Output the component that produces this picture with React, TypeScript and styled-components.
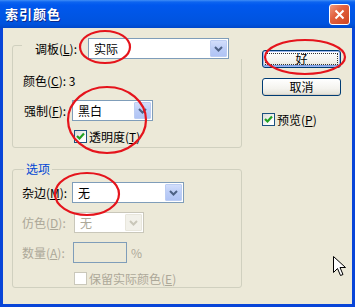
import React from "react";
import styled, { createGlobalStyle } from "styled-components";

const Global = createGlobalStyle`
  html, body { margin: 0; padding: 0; background: #ffffff; }
  body { font-family: "Noto Sans CJK SC", "Noto Sans", sans-serif; }
  #root { width: 355px; height: 307px; }
`;

const FONT = `"Noto Sans CJK SC", "Noto Sans", sans-serif`;

const Window = styled.div`
  position: relative;
  width: 355px;
  height: 307px;
  display: flex;
  flex-direction: column;
  background: #0845d8;
  overflow: hidden;
  font-family: ${FONT};
  font-size: 12px;
  color: #000;
`;

const TitleBar = styled.div`
  height: 28px;
  flex: none;
  display: flex;
  align-items: center;
  justify-content: space-between;
  padding: 0 5px 0 5px;
  background: linear-gradient(
    to bottom,
    #3f8ef6 0px,
    #0d65f0 2px,
    #0058ee 5px,
    #0056e6 50%,
    #0053de 85%,
    #0048ca 100%
  );
`;

const Title = styled.span`
  color: #ffffff;
  font-weight: bold;
  font-size: 13px;
  line-height: 14px;
  letter-spacing: 1px;
  text-shadow: 1px 1px 0 #0a2a8c;
`;

const CloseButton = styled.div`
  width: 19px;
  height: 19px;
  border: 1px solid #ffffff;
  border-radius: 3px;
  background: linear-gradient(135deg, #ef9a80 0%, #e2613f 40%, #cf4420 100%);
  display: flex;
  align-items: center;
  justify-content: center;
`;

const Client = styled.div`
  flex: 1;
  margin: 0 3px 3px 3px;
  background: #ece9d8;
  display: flex;
  padding: 10px 0 0 9px;
`;

const LeftColumn = styled.div`
  width: 230px;
  display: flex;
  flex-direction: column;
`;

const GroupBox = styled.div<{ $top: number; $bottom: number }>`
  margin-top: ${(p) => p.$top}px;
  border: 1px solid #d0d0bf;
  border-radius: 3px;
  padding-bottom: ${(p) => p.$bottom}px;
  display: flex;
  flex-direction: column;
`;

const LegendRow = styled.div`
  margin: -8px 0 0 9px;
  width: 213px;
  height: 21px;
  padding-left: 13px;
  background: #ece9d8;
  display: grid;
  grid-template-columns: 53px 141px;
  align-items: center;
`;

const LegendText = styled.span`
  align-self: flex-start;
  margin: -8px 0 0 11px;
  padding: 0 2px;
  line-height: 14px;
  height: 14px;
  background: #ece9d8;
  color: #0046d5;
`;

const Rows = styled.div<{ $top: number }>`
  margin-top: ${(p) => p.$top}px;
  padding-left: 9px;
  display: grid;
  grid-template-columns: 50px auto;
  row-gap: 9px;
  justify-items: start;
  align-items: center;
`;

const Label = styled.span<{ $disabled?: boolean; $indent?: number }>`
  line-height: 14px;
  white-space: nowrap;
  margin-left: ${(p) => p.$indent ?? 0}px;
  color: ${(p) => (p.$disabled ? "#aca899" : "#000")};
`;

const FullRow = styled.div<{ $indent?: number }>`
  grid-column: 1 / span 2;
  height: 21px;
  display: flex;
  align-items: center;
  padding-left: ${(p) => p.$indent ?? 0}px;
`;

const ControlRow = styled.div<{ $shift?: number }>`
  display: flex;
  align-items: center;
  gap: 4px;
  margin-left: ${(p) => p.$shift ?? 0}px;
`;

const ComboBox = styled.div<{ $w: number; $disabled?: boolean }>`
  width: ${(p) => p.$w}px;
  height: 21px;
  box-sizing: border-box;
  border: 1px solid ${(p) => (p.$disabled ? "#c9c7ba" : "#7f9db9")};
  background: #ffffff;
  display: flex;
  align-items: stretch;
  padding: 1px;
`;

const ComboValue = styled.span<{ $disabled?: boolean }>`
  flex: 1;
  padding-left: 4px;
  display: flex;
  align-items: center;
  line-height: 14px;
  color: ${(p) => (p.$disabled ? "#aca899" : "#000")};
`;

const DropButton = styled.div<{ $disabled?: boolean }>`
  width: 15px;
  border: 1px solid ${(p) => (p.$disabled ? "#e8e6dc" : "#bccdf3")};
  border-radius: 1px;
  background: ${(p) =>
    p.$disabled
      ? "#f2f1ea"
      : "linear-gradient(to bottom, #d2defb 0%, #bccdf7 50%, #b0c4f5 100%)"};
  display: flex;
  align-items: center;
  justify-content: center;
`;

const NumberField = styled.div`
  width: 54px;
  height: 21px;
  box-sizing: border-box;
  border: 1px solid #7f9db9;
  background: #ece9d8;
`;

const CheckRow = styled.label<{ $disabled?: boolean; $indent?: number }>`
  display: flex;
  align-items: center;
  gap: 2px;
  height: 13px;
  margin-left: ${(p) => p.$indent ?? 0}px;
  color: ${(p) => (p.$disabled ? "#aca899" : "#000")};
  line-height: 14px;
  white-space: nowrap;
`;

const CheckSquare = styled.span<{ $disabled?: boolean }>`
  width: 13px;
  height: 13px;
  box-sizing: border-box;
  border: 1px solid ${(p) => (p.$disabled ? "#cac8bb" : "#1c5180")};
  background: ${(p) =>
    p.$disabled ? "#ffffff" : "linear-gradient(135deg, #dcdcd7 0%, #ffffff 80%)"};
  display: flex;
  align-items: center;
  justify-content: center;
  flex: none;
`;

const RightColumn = styled.div`
  margin-left: 20px;
  padding-top: 12px;
  display: flex;
  flex-direction: column;
  align-items: flex-start;
`;

const PushButton = styled.div<{ $default?: boolean; $gap?: number }>`
  width: 79px;
  height: 18px;
  box-sizing: border-box;
  margin-top: ${(p) => p.$gap ?? 0}px;
  border: 1px solid #003c74;
  border-radius: 3px;
  background: linear-gradient(to bottom, #ffffff 0%, #f4f3ee 60%, #e3e1d6 100%);
  box-shadow: ${(p) =>
    p.$default ? "inset 0 0 0 1px #9bb6ee, inset 0 -1px 0 1px #7a9de6" : "inset 0 -1px 0 #d6d0c5"};
  display: flex;
  align-items: center;
  justify-content: center;
  line-height: 14px;
  position: relative;
`;

const FocusRect = styled.span`
  position: absolute;
  inset: 2px;
  border: 1px dotted #333;
`;

const Mn = styled.span`
  text-decoration: underline;
`;

const Overlay = styled.svg`
  position: absolute;
  left: 0;
  top: 0;
  width: 355px;
  height: 307px;
  pointer-events: none;
`;

const Chevron = ({ disabled }: { disabled?: boolean }) => (
  <svg width="9" height="6" viewBox="0 0 9 6">
    <path
      d="M1 1 L4.5 4.5 L8 1"
      fill="none"
      stroke={disabled ? "#c9c7ba" : "#4d6185"}
      strokeWidth="2"
    />
  </svg>
);

const Combo = ({ w, value, disabled }: { w: number; value: string; disabled?: boolean }) => (
  <ComboBox $w={w} $disabled={disabled}>
    <ComboValue $disabled={disabled}>{value}</ComboValue>
    <DropButton $disabled={disabled}>
      <Chevron disabled={disabled} />
    </DropButton>
  </ComboBox>
);

const Check = ({ checked, disabled }: { checked?: boolean; disabled?: boolean }) => (
  <CheckSquare $disabled={disabled}>
    {checked && (
      <svg width="9" height="9" viewBox="0 0 9 9">
        <path d="M1 4 L3.5 6.5 L8 1.5" fill="none" stroke="#21a121" strokeWidth="2.2" />
      </svg>
    )}
  </CheckSquare>
);

export default function App() {
  return (
    <>
      <Global />
      <Window>
        <TitleBar>
          <Title>索引颜色</Title>
          <CloseButton>
            <svg width="11" height="11" viewBox="0 0 11 11">
              <path d="M1.5 1.5 L9.5 9.5 M9.5 1.5 L1.5 9.5" stroke="#fff" strokeWidth="2" />
            </svg>
          </CloseButton>
        </TitleBar>
        <Client>
          <LeftColumn>
            <GroupBox $top={7} $bottom={4}>
              <LegendRow>
                <Label>
                  调板(<Mn>L</Mn>):
                </Label>
                <Combo w={141} value="实际" />
              </LegendRow>
              <Rows $top={11}>
                <FullRow $indent={1}>
                  <Label>
                    颜色(<Mn>C</Mn>): 3
                  </Label>
                </FullRow>
                <Label $indent={2}>
                  强制(<Mn>F</Mn>):
                </Label>
                <Combo w={81} value="黑白" />
                <span />
                <CheckRow $indent={2}>
                  <Check checked />
                  <span>
                    透明度(<Mn>T</Mn>)
                  </span>
                </CheckRow>
              </Rows>
            </GroupBox>
            <GroupBox $top={21} $bottom={2}>
              <LegendText>选项</LegendText>
              <Rows $top={6}>
                <Label>
                  杂边(<Mn>M</Mn>):
                </Label>
                <Combo w={112} value="无" />
                <Label $disabled>
                  仿色(<Mn>D</Mn>):
                </Label>
                <ControlRow $shift={2}>
                  <Combo w={70} value="无" disabled />
                </ControlRow>
                <Label $disabled>
                  数量(<Mn>A</Mn>):
                </Label>
                <ControlRow $shift={1}>
                  <NumberField />
                  <Label $disabled>%</Label>
                </ControlRow>
                <span />
                <CheckRow $disabled $indent={2}>
                  <Check disabled />
                  <span>
                    保留实际颜色(<Mn>E</Mn>)
                  </span>
                </CheckRow>
              </Rows>
            </GroupBox>
          </LeftColumn>
          <RightColumn>
            <PushButton $default>
              <FocusRect />
              好
            </PushButton>
            <PushButton $gap={10}>取消</PushButton>
            <CheckRow style={{ marginTop: 17 }}>
              <Check checked />
              <span>
                预览(<Mn>P</Mn>)
              </span>
            </CheckRow>
          </RightColumn>
        </Client>
        <Overlay viewBox="0 0 355 307">
          <g fill="none" stroke="#e5141c" strokeWidth="2.2">
            <ellipse cx="105" cy="47" rx="25" ry="16" />
            <ellipse cx="107" cy="120" rx="39" ry="33" />
            <ellipse cx="305" cy="57" rx="40" ry="17" />
            <ellipse cx="87" cy="194" rx="32" ry="21" />
          </g>
          <path
            d="M333.5 256.5 L333.5 272.5 L337.5 268.5 L340.5 275.5 L343 274.5 L340 267.5 L345.5 267.5 Z"
            fill="#ffffff"
            stroke="#000000"
            strokeWidth="1"
          />
        </Overlay>
      </Window>
    </>
  );
}
